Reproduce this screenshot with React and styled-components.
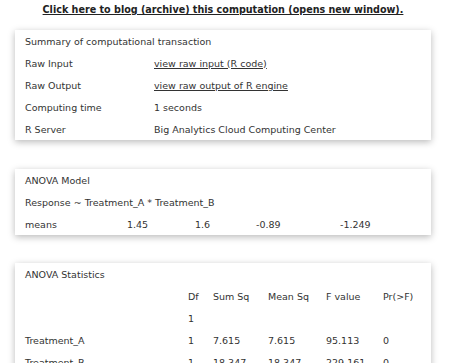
import React from "react";
import styled, { createGlobalStyle } from "styled-components";

const Global = createGlobalStyle`
  html, body { margin: 0; padding: 0; background: #fff; }
  body { font-family: "DejaVu Sans", Verdana, sans-serif; color: #333; }
`;

const Page = styled.div`
  width: 416px;
  margin-left: 15px;
  display: flex;
  flex-direction: column;
`;

const Header = styled.div`
  height: 19px;
  display: flex;
  align-items: center;
  justify-content: center;
  margin-bottom: 11px;
`;

const BlogLink = styled.a`
  font-size: 9.6px;
  font-weight: bold;
  color: #222;
  text-decoration: underline;
  white-space: nowrap;
`;

const Card = styled.div`
  background: #fff;
  box-shadow: 0 2px 7px rgba(0, 0, 0, 0.28);
  padding: 0 10px;
  margin-bottom: ${(p) => p.$gap || 0}px;
  display: grid;
  grid-template-columns: ${(p) => p.$cols};
  grid-auto-rows: 22px;
  align-items: center;
  font-size: 9.5px;
`;

const Cell = styled.div`
  white-space: nowrap;
  grid-column: ${(p) => (p.$span ? "1 / -1" : "auto")};
`;

const TextLink = styled.a`
  color: #333;
  text-decoration: underline;
`;

const summary = [
  ["Raw Input", <TextLink href="#">view raw input (R code)</TextLink>],
  ["Raw Output", <TextLink href="#">view raw output of R engine</TextLink>],
  ["Computing time", "1 seconds"],
  ["R Server", "Big Analytics Cloud Computing Center"],
];

const means = ["means", "1.45", "1.6", "-0.89", "-1.249"];

const stats = [
  ["", "Df", "Sum Sq", "Mean Sq", "F value", "Pr(>F)"],
  ["", "1", "", "", "", ""],
  ["Treatment_A", "1", "7.615", "7.615", "95.113", "0"],
  ["Treatment_B", "1", "18.347", "18.347", "229.161", "0"],
];

export default function App() {
  return (
    <>
      <Global />
      <Page>
        <Header>
          <BlogLink href="#">
            Click here to blog (archive) this computation (opens new window).
          </BlogLink>
        </Header>

        <Card $cols="129px 1fr" $gap={29}>
          <Cell $span>Summary of computational transaction</Cell>
          {summary.map(([k, v]) => (
            <React.Fragment key={k}>
              <Cell>{k}</Cell>
              <Cell>{v}</Cell>
            </React.Fragment>
          ))}
        </Card>

        <Card $cols="102px 68px 61px 84px 1fr" $gap={28}>
          <Cell $span>ANOVA Model</Cell>
          <Cell $span>Response ~ Treatment_A * Treatment_B</Cell>
          {means.map((m, i) => (
            <Cell key={i}>{m}</Cell>
          ))}
        </Card>

        <Card $cols="163px 25px 55px 58px 57px 1fr">
          <Cell $span>ANOVA Statistics</Cell>
          {stats.map((row, r) =>
            row.map((c, i) => <Cell key={r + "-" + i}>{c}</Cell>)
          )}
        </Card>
      </Page>
    </>
  );
}
